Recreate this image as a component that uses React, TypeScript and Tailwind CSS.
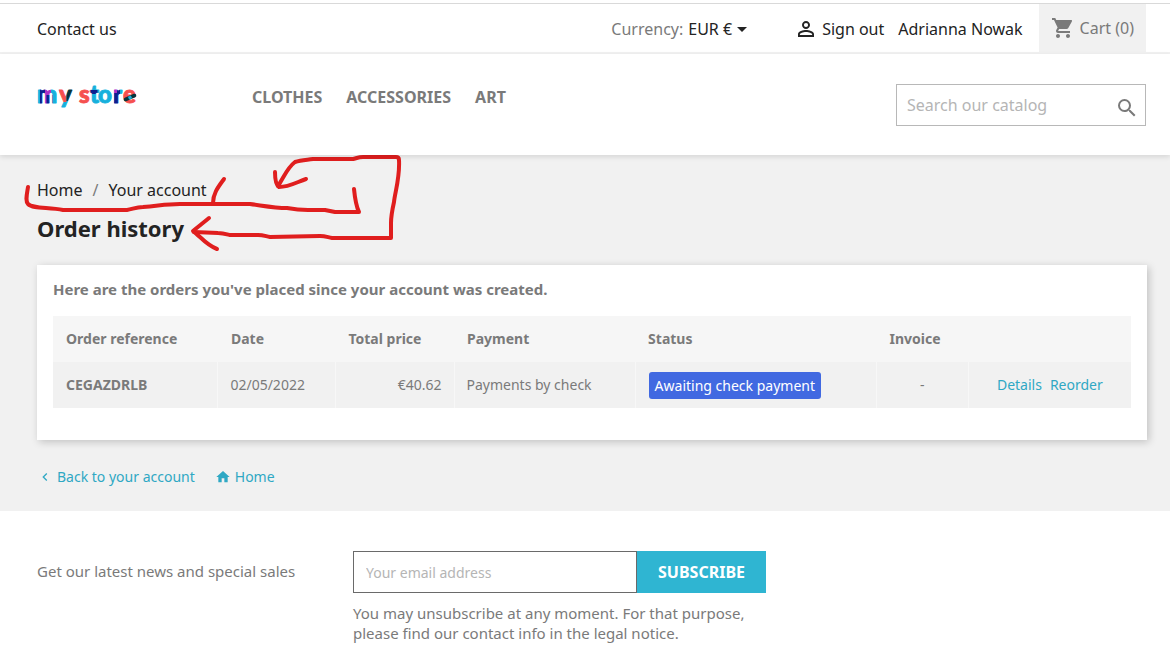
import {
  MdArrowDropDown,
  MdChevronLeft,
  MdHome,
  MdPersonOutline,
  MdSearch,
  MdShoppingCart,
} from "react-icons/md";

function Logo() {
  return (
    <svg width="104" height="44" viewBox="0 0 104 44" role="img" aria-label="my store">
      <defs>
        <pattern id="logo-ink" patternUnits="userSpaceOnUse" width="104" height="44">
          <rect width="104" height="44" fill="#17b0dc" />
          <rect x="3" y="0" width="5" height="44" fill="#0b1f8f" />
          <rect x="8" y="0" width="6" height="44" fill="#a92fc4" />
          <rect x="9.5" y="17" width="6" height="20" fill="#0b1f8f" />
          <rect x="22" y="0" width="7.5" height="24" fill="#f5504f" />
          <rect x="29.5" y="0" width="8" height="23" fill="#06343c" />
          <rect x="41" y="0" width="13" height="44" fill="#f5504f" />
          <rect x="53.5" y="12" width="7" height="4" fill="#0b1f8f" />
          <rect x="77" y="0" width="6" height="44" fill="#0b1f8f" />
          <rect x="77" y="10" width="3" height="5" fill="#a92fc4" />
          <rect x="86" y="0" width="18" height="44" fill="#f5504f" />
        </pattern>
      </defs>
      <g
        className="font-['Lato',sans-serif] text-[24px] font-black"
        fill="url(#logo-ink)"
        stroke="url(#logo-ink)"
        strokeWidth="0.9"
        strokeLinejoin="round"
      >
        <text x="0" y="25">m</text>
        <text x="22" y="25">y</text>
        <text x="42" y="25">s</text>
        <text x="53" y="25">t</text>
        <text x="61" y="25">o</text>
        <text x="76" y="25">r</text>
        <text x="86" y="25">e</text>
      </g>
      <path d="M88.5 21.5 L97.5 17.5" stroke="#06343c" strokeWidth="3.6" strokeLinecap="round" />
      <path d="M91.5 20.2 L94.5 18.8" stroke="#17b0dc" strokeWidth="3" />
    </svg>
  );
}

function Annotations() {
  return (
    <svg
      className="pointer-events-none absolute top-0 left-0"
      width="420"
      height="110"
      viewBox="0 155 420 110"
      fill="none"
      stroke="#e01e1e"
      strokeWidth="4"
      strokeLinecap="round"
      strokeLinejoin="round"
      aria-hidden="true"
    >
      <path d="M28 187 C27 194 25 201 28 204 C33 209 48 207 63 210 L127 210 C133 209 136 207 143 207 C158 206 165 204 180 204 L250 204 C265 206 275 208 287 208 C298 210 302 210 308 210 L325 210 L335 212 L359 212 C356 206 355 199 354 189" />
      <path d="M224 179 C219 186 213 193 213 203" />
      <path d="M278 186 C284 177 287 168 295 162 C301 160 306 160 313 159 L353 159 C357 158 359 157 363 157 L396 157 Q399 157 399 160 C400 178 395 192 394 202 C392 211 391 217 391 223 L391 238 L332 238 C327 237 325 236 320 236 L270 237 C265 236 263 235 258 235 L230 235 C226 234 223 233 218 233 L194 232" />
      <path d="M275 172 C275 180 276 185 279 187 C289 187 297 182 306 179" />
      <path d="M209 218 C203 223 199 226 193 231 C200 236 206 245 217 249" />
    </svg>
  );
}

const columns = ["Order reference", "Date", "Total price", "Payment", "Status", "Invoice", ""];
const cell = "border-l border-[#f7f7f7] px-3 first:border-l-0";

export default function App() {
  return (
    <div className="min-h-screen bg-white pt-[3px] font-['Noto_Sans',sans-serif] text-[#7a7a7a]">
      <nav className="flex h-[51px] items-center border-t border-b-2 border-t-[#d9d9d9] border-b-[#f1f1f1] pr-6 pl-[37px] text-base text-[#232323]">
        <a href="#contact" className="pt-0.5">Contact us</a>
        <div className="ml-auto flex items-center pt-0.5">
          <span className="text-[#7a7a7a]">Currency:</span>
          <button type="button" className="ml-[5px] flex items-center">
            EUR €
            <MdArrowDropDown size={24} className="-ml-0.5" />
          </button>
          <a href="#signout" className="ml-10 flex items-center gap-1">
            <MdPersonOutline size={24} />
            Sign out
          </a>
          <a href="#account" className="ml-3.5">Adrianna Nowak</a>
        </div>
        <a href="#cart" className="ml-4 flex items-center gap-[5px] self-stretch bg-[#f1f1f1] px-3 text-[#7a7a7a]">
          <MdShoppingCart size={24} />
          Cart (0)
        </a>
      </nav>

      <header className="relative z-10 flex h-[101px] items-start bg-white pr-6 pl-[37px] shadow-[0_2px_5px_0_rgba(0,0,0,0.11)]">
        <a href="#store" className="mt-6">
          <Logo />
        </a>
        <div className="mt-[31px] ml-[111px] flex gap-6 text-base font-bold">
          <a href="#clothes">CLOTHES</a>
          <a href="#accessories">ACCESSORIES</a>
          <a href="#art">ART</a>
        </div>
        <form className="mt-[30px] ml-auto flex h-[42px] w-[250px] items-center border border-[#b8b8b8] pr-1.5 pl-2.5">
          <input
            type="text"
            aria-label="Search"
            placeholder="Search our catalog"
            className="min-w-0 flex-1 text-base outline-none placeholder:text-[#b5b5b5]"
          />
          <button type="button" aria-label="Search catalog" className="pt-1.5">
            <MdSearch size={24} />
          </button>
        </form>
      </header>

      <main className="relative h-[356px] bg-[#f1f1f1] pt-6 pr-[23px] pl-[37px]">
        <div className="flex text-base leading-[22px] text-[#232323]">
          <a href="#home">Home</a>
          <span className="mx-2.5 text-[#7a7a7a]">/</span>
          <a href="#account">Your account</a>
        </div>
        <h1 className="mt-[11px] text-[22px] leading-8 font-bold text-[#232323]">Order history</h1>

        <section className="mt-[21px] bg-white px-4 pt-3 pb-8 shadow-[2px_2px_8px_0_rgba(0,0,0,0.2)]">
          <h2 className="text-[15px] leading-6 font-bold">
            Here are the orders you've placed since your account was created.
          </h2>
          <table className="mt-[15px] w-full table-fixed text-left text-sm">
            <colgroup>
              <col className="w-[15.3%]" />
              <col className="w-[10.9%]" />
              <col className="w-[11%]" />
              <col className="w-[16.8%]" />
              <col className="w-[22.4%]" />
              <col className="w-[8.5%]" />
              <col className="w-[15.1%]" />
            </colgroup>
            <thead className="bg-[#f6f6f6]">
              <tr className="h-[46px]">
                {columns.map((name, i) => (
                  <th key={i} className="px-[13px] font-bold">{name}</th>
                ))}
              </tr>
            </thead>
            <tbody className="bg-[#f1f1f1]">
              <tr className="h-[46px]">
                <th scope="row" className="px-[13px] font-bold">CEGAZDRLB</th>
                <td className={cell}>02/05/2022</td>
                <td className={cell + " text-right"}>€40.62</td>
                <td className={cell}>Payments by check</td>
                <td className="border-l border-[#f7f7f7] px-[13px]">
                  <span className="inline-block rounded-[3px] bg-[#4169e1] px-1.5 py-1 leading-[19px] whitespace-nowrap text-white">
                    Awaiting check payment
                  </span>
                </td>
                <td className={cell + " text-center"}>-</td>
                <td className={cell + " text-center whitespace-nowrap text-[#2fa8c4]"}>
                  <a href="#details">Details</a>
                  <a href="#reorder" className="ml-2">Reorder</a>
                </td>
              </tr>
            </tbody>
          </table>
        </section>

        <div className="mt-[26px] flex text-sm leading-[22px] text-[#2fa8c4]">
          <a href="#back" className="flex items-center gap-1">
            <MdChevronLeft size={16} />
            Back to your account
          </a>
          <a href="#home" className="ml-5 flex items-center gap-1">
            <MdHome size={16} />
            Home
          </a>
        </div>
        <Annotations />
      </main>

      <footer className="flex items-start pt-10 pl-[37px]">
        <label htmlFor="email" className="w-[316px] pt-[9px] text-[15px] leading-[22px]">
          Get our latest news and special sales
        </label>
        <form className="w-[413px]">
          <div className="flex h-[42px]">
            <input
              id="email"
              type="email"
              placeholder="Your email address"
              className="min-w-0 flex-1 border border-[#6a6a6a] px-3 pt-0.5 text-sm outline-none placeholder:text-[#b5b5b5]"
            />
            <button type="button" className="bg-[#2fb5d2] px-[21px] text-base font-bold text-white">
              SUBSCRIBE
            </button>
          </div>
          <p className="mt-2.5 text-[15px] leading-5">
            You may unsubscribe at any moment. For that purpose, please find our contact info in the
            legal notice.
          </p>
        </form>
      </footer>
    </div>
  );
}
